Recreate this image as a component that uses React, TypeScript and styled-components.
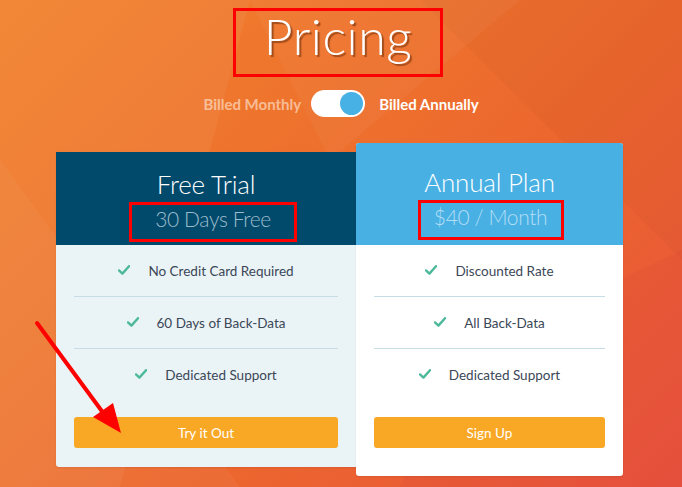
import React from "react";
import styled, { createGlobalStyle } from "styled-components";

const Global = createGlobalStyle`
  html, body { margin: 0; padding: 0; }
  body { width: 682px; height: 487px; overflow: hidden; font-family: "Lato", "Open Sans", sans-serif; }
  * { box-sizing: border-box; }
`;

const Page = styled.div`
  position: relative;
  width: 682px;
  height: 487px;
  overflow: hidden;
  background: linear-gradient(135deg, #f2822d 0%, #ee732d 35%, #ec662e 60%, #e9533d 100%);
  display: flex;
  flex-direction: column;
  align-items: center;
  padding-top: 8px;
`;

const Facets = styled.svg`
  position: absolute;
  inset: 0;
  width: 682px;
  height: 487px;
  pointer-events: none;
`;

const Content = styled.div`
  position: relative;
  z-index: 1;
  display: flex;
  flex-direction: column;
  align-items: center;
  width: 100%;
`;

const TitleBox = styled.div`
  width: 210px;
  height: 69px;
  border: 3px solid #ff0000;
  display: flex;
  justify-content: center;
  margin-left: -6px;
`;

const Title = styled.h1`
  margin: 0;
  font-family: "Lato", sans-serif;
  font-weight: 300;
  font-size: 50px;
  line-height: 50px;
  color: #ffffff;
  text-shadow: 2px 2px 1px rgba(110, 45, 10, 0.6);
  letter-spacing: 0.5px;
`;

const ToggleRow = styled.div`
  display: flex;
  align-items: center;
  margin-top: 13px;
  height: 27px;
`;

const ToggleLabel = styled.span<{ $active?: boolean }>`
  font-family: "Lato", sans-serif;
  font-weight: 700;
  font-size: 15px;
  color: ${(p) => (p.$active ? "#ffffff" : "rgba(255, 235, 220, 0.62)")};
`;

const Switch = styled.div`
  width: 54px;
  height: 27px;
  border-radius: 14px;
  background: #ffffff;
  margin: 0 14px 0 10px;
  display: flex;
  align-items: center;
  justify-content: flex-end;
  padding-right: 2px;
`;

const Knob = styled.div`
  width: 23px;
  height: 23px;
  border-radius: 50%;
  background: #47b0e4;
`;

const CardsRow = styled.div`
  display: flex;
  align-items: center;
  margin-top: 26px;
  padding-right: 3px;
`;

const Card = styled.div<{ $width: number; $body: string; $radius: string; $z: number; $bottom: number }>`
  position: relative;
  z-index: ${(p) => p.$z};
  width: ${(p) => p.$width}px;
  background: ${(p) => p.$body};
  border-radius: ${(p) => p.$radius};
  overflow: hidden;
  display: flex;
  flex-direction: column;
  padding-bottom: ${(p) => p.$bottom}px;
  box-shadow: 0 1px 2px rgba(0, 0, 0, 0.08);
`;

const Header = styled.div<{ $bg: string; $pt: number; $pb: number }>`
  background: ${(p) => p.$bg};
  padding: ${(p) => p.$pt}px 0 ${(p) => p.$pb}px;
  display: flex;
  flex-direction: column;
  align-items: center;
`;

const PlanName = styled.div`
  font-family: "Lato", sans-serif;
  font-weight: 300;
  font-size: 26px;
  line-height: 30px;
  color: #ffffff;
  margin-bottom: 3px;
  letter-spacing: -0.2px;
`;

const PriceBox = styled.div<{ $width: number; $shift: number; $color: string }>`
  width: ${(p) => p.$width}px;
  height: 40px;
  border: 3px solid #ff0000;
  margin-left: ${(p) => p.$shift}px;
  display: flex;
  justify-content: center;
  font-family: "Lato", sans-serif;
  font-weight: 300;
  font-size: 21px;
  line-height: 27px;
  letter-spacing: -0.4px;
  color: ${(p) => p.$color};
`;

const Features = styled.ul`
  list-style: none;
  margin: 0;
  padding: 0 18px;
`;

const Feature = styled.li`
  height: 51px;
  display: flex;
  align-items: center;
  justify-content: center;
  gap: 18px;
  font-family: "Lato", sans-serif;
  font-size: 13.5px;
  color: #3b4757;
  & + & {
    border-top: 1px solid #c6dde7;
    height: 52px;
  }
`;

const Check = styled.svg`
  width: 12px;
  height: 10px;
  flex: none;
  margin-top: -1px;
`;

const Button = styled.button`
  margin: 17px 18px 0;
  height: 31px;
  border: none;
  border-radius: 3px;
  background: #f9a825;
  color: #ffffff;
  font-family: "Lato", sans-serif;
  font-size: 13.5px;
  cursor: pointer;
`;

const Arrow = styled.svg`
  position: absolute;
  z-index: 5;
  left: 0;
  top: 0;
  width: 682px;
  height: 487px;
  pointer-events: none;
`;

const CheckIcon = () => (
  <Check viewBox="0 0 12 10">
    <path d="M1 5.4 L4.4 8.6 L11 1.2" fill="none" stroke="#4cb99a" strokeWidth="2.4" strokeLinecap="round" strokeLinejoin="round" />
  </Check>
);

type Plan = {
  name: string;
  price: string;
  features: string[];
  cta: string;
};

const trial: Plan = {
  name: "Free Trial",
  price: "30 Days Free",
  features: ["No Credit Card Required", "60 Days of Back-Data", "Dedicated Support"],
  cta: "Try it Out",
};

const annual: Plan = {
  name: "Annual Plan",
  price: "$40 / Month",
  features: ["Discounted Rate", "All Back-Data", "Dedicated Support"],
  cta: "Sign Up",
};

export default function App() {
  return (
    <>
      <Global />
      <Page>
        <Facets viewBox="0 0 682 487">
          <polygon points="0,0 250,0 120,487 0,487" fill="#ffffff" opacity="0.05" />
          <polygon points="0,160 240,487 0,487" fill="#ffffff" opacity="0.04" />
          <polygon points="420,0 682,0 682,260" fill="#000000" opacity="0.025" />
          <polygon points="450,360 682,250 682,487 400,487" fill="#c0203a" opacity="0.08" />
          <polygon points="250,0 520,0 330,160" fill="#ffffff" opacity="0.035" />
        </Facets>
        <Content>
          <TitleBox>
            <Title>Pricing</Title>
          </TitleBox>
          <ToggleRow>
            <ToggleLabel>Billed Monthly</ToggleLabel>
            <Switch>
              <Knob />
            </Switch>
            <ToggleLabel $active>Billed Annually</ToggleLabel>
          </ToggleRow>
          <CardsRow>
            <Card $width={300} $body="#eaf3f6" $radius="0 0 0 3px" $z={1} $bottom={19}>
              <Header $bg="#024a6b" $pt={17} $pb={3}>
                <PlanName>{trial.name}</PlanName>
                <PriceBox $width={168} $shift={14} $color="#9dbccb">{trial.price}</PriceBox>
              </Header>
              <Features>
                {trial.features.map((f) => (
                  <Feature key={f}>
                    <CheckIcon />
                    <span>{f}</span>
                  </Feature>
                ))}
              </Features>
              <Button>{trial.cta}</Button>
            </Card>
            <Card $width={267} $body="#ffffff" $radius="3px" $z={2} $bottom={28}>
              <Header $bg="#48b0e3" $pt={24} $pb={5}>
                <PlanName>{annual.name}</PlanName>
                <PriceBox $width={146} $shift={2} $color="#b3def5">{annual.price}</PriceBox>
              </Header>
              <Features>
                {annual.features.map((f) => (
                  <Feature key={f}>
                    <CheckIcon />
                    <span>{f}</span>
                  </Feature>
                ))}
              </Features>
              <Button>{annual.cta}</Button>
            </Card>
          </CardsRow>
        </Content>
        <Arrow viewBox="0 0 682 487">
          <line x1="37" y1="323" x2="104" y2="414" stroke="#ff0000" strokeWidth="4" strokeLinecap="round" />
          <polygon points="93,417 113,403 121,433" fill="#ff0000" />
        </Arrow>
      </Page>
    </>
  );
}
